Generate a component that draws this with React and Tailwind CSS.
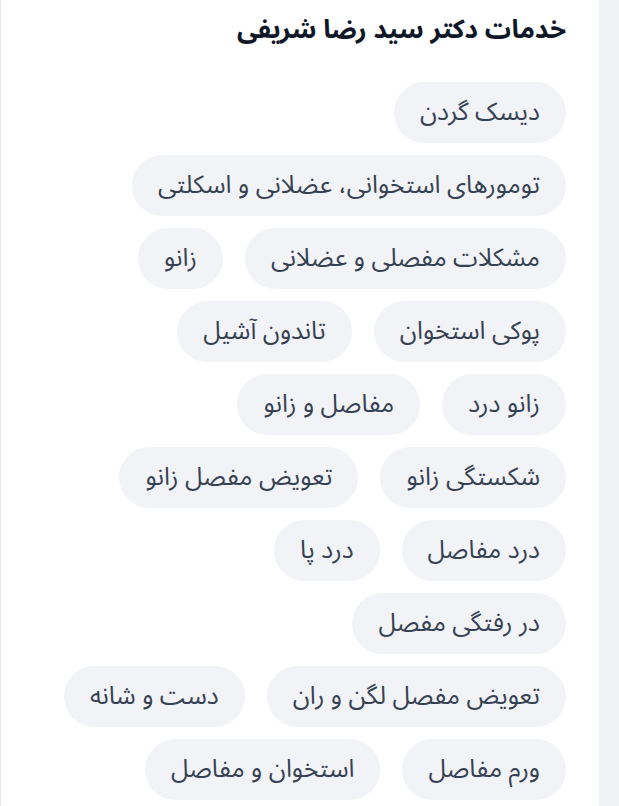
import React from 'react';

const services = [
  'دیسک گردن',
  'تومورهای استخوانی، عضلانی و اسکلتی',
  'مشکلات مفصلی و عضلانی',
  'زانو',
  'پوکی استخوان',
  'تاندون آشیل',
  'زانو درد',
  'مفاصل و زانو',
  'شکستگی زانو',
  'تعویض مفصل زانو',
  'درد مفاصل',
  'درد پا',
  'در رفتگی مفصل',
  'تعویض مفصل لگن و ران',
  'دست و شانه',
  'ورم مفاصل',
  'استخوان و مفاصل',
];

export default function App() {
  return (
    <div
      className="flex min-h-[806px] w-[619px] bg-[#f1f2f5]"
      style={{ fontFamily: '"Noto Sans Arabic", "DejaVu Sans", sans-serif' }}
    >
      {/* Card */}
      <div dir="rtl" className="w-[599px] bg-white border-l border-gray-200 pr-[33px] pl-[52px] pt-[10px] pb-6">
        <h2 className="text-[26px] font-bold text-gray-900 leading-[40px] mb-[32px] whitespace-nowrap">
          خدمات دکتر سید رضا شریفی
        </h2>

        <div className="flex flex-wrap gap-x-[22px] gap-y-[12px]">
          {services.map((s) => (
            <span
              key={s}
              className="inline-flex items-center h-[61px] px-[26px] rounded-full bg-[#f2f3f6] text-[25px] text-gray-700 whitespace-nowrap"
            >
              {s}
            </span>
          ))}
        </div>
      </div>
    </div>
  );
}
